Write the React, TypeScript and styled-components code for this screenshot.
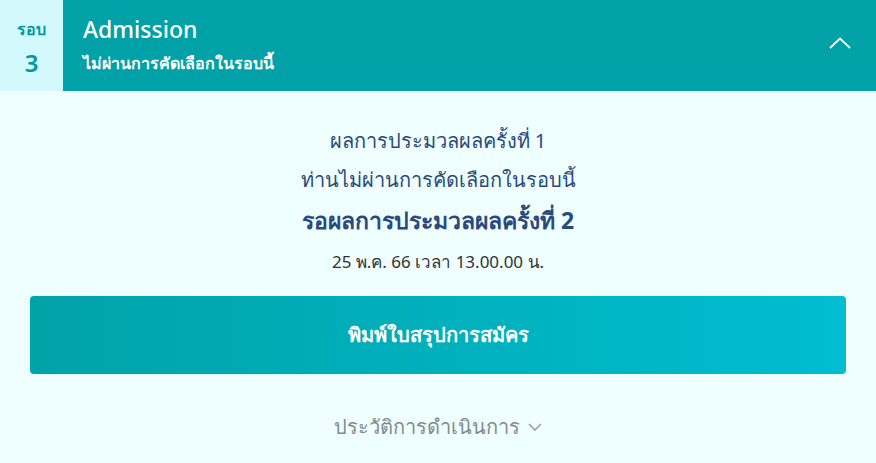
import React from "react";
import styled, {createGlobalStyle} from "styled-components";

const GlobalStyle = createGlobalStyle`
  html, body {
    margin: 0;
    padding: 0;
    background: #effeff;
  }
  body {
    font-family: "Noto Sans", "Open Sans", sans-serif;
  }
`

export default function App() {
    return (
        <>
            <GlobalStyle/>
            <Card>
                <Header>
                    <RoundBox>
                        <RoundLabel>รอบ</RoundLabel>
                        <RoundNumber>3</RoundNumber>
                    </RoundBox>
                    <HeaderInfo>
                        <Title>Admission</Title>
                        <Subtitle>ไม่ผ่านการคัดเลือกในรอบนี้</Subtitle>
                    </HeaderInfo>
                    <Toggle aria-label="collapse">
                        <svg width="22" height="12" viewBox="0 0 22 12" fill="none">
                            <path d="M1 11 L11 1.5 L21 11" stroke="#ffffff" strokeWidth="1.8"/>
                        </svg>
                    </Toggle>
                </Header>
                <Body>
                    <Message>
                        <Line>ผลการประมวลผลครั้งที่ 1</Line>
                        <Line>ท่านไม่ผ่านการคัดเลือกในรอบนี้</Line>
                        <Headline>รอผลการประมวลผลครั้งที่ 2</Headline>
                        <DateText>25 พ.ค. 66 เวลา 13.00.00 น.</DateText>
                    </Message>
                    <PrintButton>พิมพ์ใบสรุปการสมัคร</PrintButton>
                    <History>
                        ประวัติการดำเนินการ
                        <svg width="14" height="8" viewBox="0 0 14 8" fill="none">
                            <path d="M1 1 L7 7 L13 1" stroke="#8a9699" strokeWidth="1.3"/>
                        </svg>
                    </History>
                </Body>
            </Card>
        </>
    )
}

const Card = styled.div`
  width: 876px;
  min-height: 463px;
  background: #effeff;
`
const Header = styled.div`
  display: flex;
  height: 91px;
  background: #00a2a8;
`
const RoundBox = styled.div`
  width: 63px;
  background: #d4f9fc;
  display: flex;
  flex-direction: column;
  align-items: center;
  justify-content: center;
  color: #009aa0;
  font-weight: 600;
`
const RoundLabel = styled.div`
  font-size: 16px;
  line-height: 34px;
`
const RoundNumber = styled.div`
  font-size: 24px;
  line-height: 34px;
`
const HeaderInfo = styled.div`
  flex: 1;
  display: flex;
  flex-direction: column;
  justify-content: center;
  padding-left: 20px;
  color: #ffffff;
`
const Title = styled.div`
  font-size: 23px;
  font-weight: 500;
  line-height: 34px;
`
const Subtitle = styled.div`
  font-size: 16px;
  font-weight: 600;
  line-height: 34px;
`
const Toggle = styled.div`
  width: 72px;
  display: flex;
  align-items: center;
  justify-content: center;
  padding-bottom: 6px;
`
const Body = styled.div`
  display: flex;
  flex-direction: column;
  align-items: center;
  padding: 30px 30px 0;
`
const Message = styled.div`
  display: flex;
  flex-direction: column;
  align-items: center;
  color: #2b4a7c;
`
const Line = styled.div`
  font-size: 20px;
  line-height: 39px;
`
const Headline = styled.div`
  font-size: 23px;
  font-weight: 700;
  line-height: 43px;
`
const DateText = styled.div`
  font-size: 17px;
  line-height: 40px;
  color: #333333;
`
const PrintButton = styled.div`
  margin-top: 14px;
  align-self: stretch;
  height: 78px;
  border-radius: 4px;
  background: linear-gradient(90deg, #00a3a8 0%, #00bdd1 100%);
  color: #ffffff;
  font-size: 20px;
  font-weight: 700;
  display: flex;
  align-items: center;
  justify-content: center;
`
const History = styled.div`
  margin-top: 38px;
  display: flex;
  align-items: center;
  gap: 8px;
  color: #7f8b8e;
  font-size: 20px;
  line-height: 30px;
`
